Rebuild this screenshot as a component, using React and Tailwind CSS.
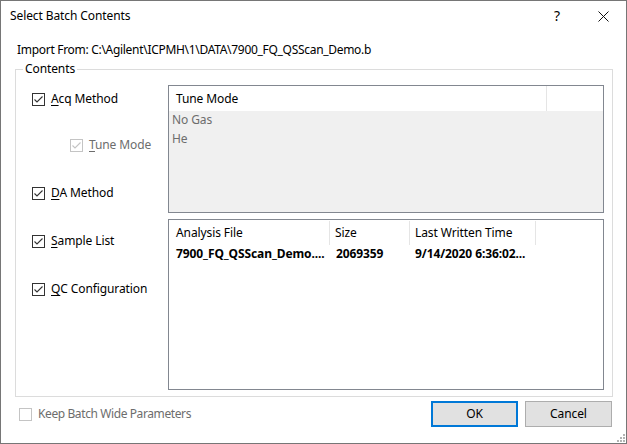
import React from "react";

const font = { fontFamily: '"Noto Sans", "Open Sans", sans-serif' };

function Check({ checked = true, disabled = false }) {
  return (
    <span
      className={`flex w-[13px] h-[13px] shrink-0 items-center justify-center border bg-white ${
        disabled ? "border-[#c4c4c4]" : "border-[#333333]"
      }`}
    >
      {checked && (
        <svg width="11" height="11" viewBox="0 0 11 11">
          <path
            d="M1.5 5.5 L4 8 L9.5 2.5"
            fill="none"
            stroke={disabled ? "#c4c4c4" : "#333333"}
            strokeWidth="1.1"
          />
        </svg>
      )}
    </span>
  );
}

function Option({ mn, rest, disabled, className = "" }) {
  return (
    <div className={`flex h-[16px] items-center gap-[6px] ${className}`}>
      <Check disabled={disabled} />
      <span className={disabled ? "text-[#6d6d6d]" : "text-black"}>
        <span className="underline underline-offset-2">{mn}</span>
        {rest}
      </span>
    </div>
  );
}

export default function App() {
  return (
    <div
      className="w-[627px] h-[444px] border border-[#767676] bg-white flex flex-col text-[12px] leading-[16px] text-black tracking-[-0.1px]"
      style={font}
    >
      {/* Title bar */}
      <div className="h-[30px] flex items-center pl-[9px] shrink-0">
        <span className="flex-1">Select Batch Contents</span>
        <span className="w-[46px] text-center text-[14px]">?</span>
        <span className="w-[46px] h-[30px] flex items-center justify-center">
          <svg width="11" height="11" viewBox="0 0 11 11">
            <path d="M0.5 0.5 L10.5 10.5 M10.5 0.5 L0.5 10.5" stroke="#111" strokeWidth="1" />
          </svg>
        </span>
      </div>

      <div className="pl-[14px] pr-[13px] flex flex-col flex-1">
        <div className="pl-[2px] mt-[11px] tracking-[-0.3px]">
          Import From: C:\Agilent\ICPMH\1\DATA\7900_FQ_QSScan_Demo.b
        </div>

        <fieldset className="mt-[3px] border border-[#dcdcdc] flex pb-[6px]">
          <legend className="ml-[7px] px-[2px] leading-[16px]">Contents</legend>
          <div className="w-[152px] shrink-0 flex flex-col pl-[16px]">
            <Option mn="A" rest="cq Method" className="mt-[14px]" />
            <Option mn="T" rest="une Mode" disabled className="mt-[30px] ml-[38px]" />
            <Option mn="D" rest="A Method" className="mt-[32px]" />
            <Option mn="S" rest="ample List" className="mt-[32px]" />
            <Option mn="Q" rest="C Configuration" className="mt-[32px]" />
          </div>

          <div className="flex-1 flex flex-col gap-[6px] mt-[8px] pr-[8px]">
            {/* Tune mode list (disabled) */}
            <div className="h-[128px] border border-[#828790] bg-[#f0f0f0] flex flex-col">
              <div className="h-[25px] bg-white flex items-stretch shrink-0">
                <div className="w-[378px] border-r border-[#e5e5e5] pl-[7px] flex items-center">
                  Tune Mode
                </div>
                <div className="flex-1" />
              </div>
              <div className="pl-[3px] pt-[1px] text-[#6d6d6d] flex flex-col gap-[3px]">
                <div>No Gas</div>
                <div>He</div>
              </div>
            </div>

            {/* Analysis file list */}
            <div className="h-[171px] border border-[#828790] bg-white flex flex-col">
              <div className="h-[25px] flex items-stretch pt-[1px] shrink-0">
                <div className="w-[161px] border-r border-[#e5e5e5] pl-[7px] flex items-center">
                  Analysis File
                </div>
                <div className="w-[80px] border-r border-[#e5e5e5] pl-[5px] flex items-center">
                  Size
                </div>
                <div className="w-[126px] border-r border-[#e5e5e5] pl-[5px] flex items-center">
                  Last Written Time
                </div>
              </div>
              <div className="flex items-center h-[20px] mt-[-1px] font-bold">
                <div className="w-[161px] pl-[7px] whitespace-nowrap overflow-hidden">
                  7900_FQ_QSScan_Demo....
                </div>
                <div className="w-[80px] pl-[6px]">2069359</div>
                <div className="w-[126px] pl-[5px] whitespace-nowrap">9/14/2020 6:36:02...</div>
              </div>
            </div>
          </div>
        </fieldset>

        <div className="flex items-center mt-[4px]">
          <div className="flex items-center gap-[6px] pl-[4px] flex-1">
            <Check checked={false} disabled />
            <span className="text-[#6d6d6d] tracking-[-0.4px]">Keep Batch Wide Parameters</span>
          </div>
          <button className="w-[87px] h-[26px] border-2 border-[#0078d7] bg-[#e1e1e1]">OK</button>
          <button className="w-[87px] h-[26px] ml-[7px] mr-[1px] border border-[#adadad] bg-[#e1e1e1]">
            Cancel
          </button>
        </div>

        <div className="flex-1 flex items-end justify-end pb-[1px] mr-[-12px]">
          <svg width="8" height="8" viewBox="0 0 8 8">
            <g fill="#b4b4b4">
              <rect x="6" y="0" width="2" height="2" />
              <rect x="3" y="3" width="2" height="2" />
              <rect x="6" y="3" width="2" height="2" />
              <rect x="0" y="6" width="2" height="2" />
              <rect x="3" y="6" width="2" height="2" />
              <rect x="6" y="6" width="2" height="2" />
            </g>
          </svg>
        </div>
      </div>
    </div>
  );
}
